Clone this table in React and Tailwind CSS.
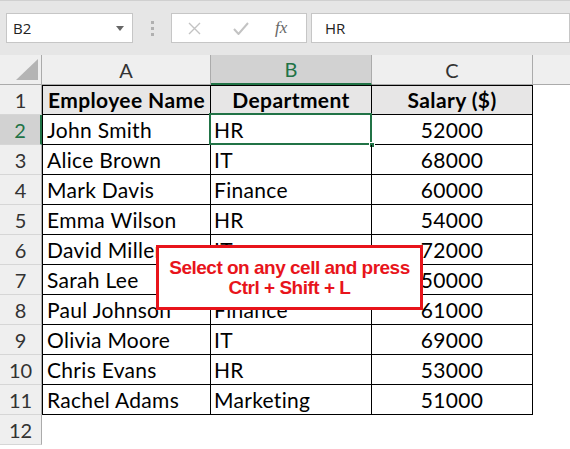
import React from 'react';

const rows = [
  ['John Smith', 'HR', '52000'],
  ['Alice Brown', 'IT', '68000'],
  ['Mark Davis', 'Finance', '60000'],
  ['Emma Wilson', 'HR', '54000'],
  ['David Miller', 'IT', '72000'],
  ['Sarah Lee', 'Finance', '50000'],
  ['Paul Johnson', 'Finance', '61000'],
  ['Olivia Moore', 'IT', '69000'],
  ['Chris Evans', 'HR', '53000'],
  ['Rachel Adams', 'Marketing', '51000'],
];

const cellFont = { fontFamily: 'Lato, "Open Sans", sans-serif' };

function RowHead({ n, active }) {
  return (
    <div
      className={
        'h-[30px] flex items-center justify-center text-[20px] border-b border-[#d6d6d6] ' +
        (active
          ? 'bg-[#d2d2d2] text-[#217346] border-r-2 border-r-[#217346]'
          : 'bg-[#efefef] text-[#333] border-r border-r-[#ababab]')
      }
    >
      {n}
    </div>
  );
}

export default function App() {
  return (
    <div className="relative w-[570px] h-[449px] overflow-hidden bg-white" style={cellFont}>
      {/* Toolbar */}
      <div className="h-[55px] bg-[#e6e6e6] border-t border-[#d0d0d0] flex items-center px-[6px]" style={{ fontFamily: '"Open Sans", sans-serif' }}>
        <div className="w-[127px] h-[30px] bg-white border border-[#c6c6c6] flex items-center justify-between pl-[6px] pr-[8px]">
          <span className="text-[15px] text-[#222]">B2</span>
          <svg width="8" height="5" viewBox="0 0 8 5"><path d="M0 0h8L4 5z" fill="#666" /></svg>
        </div>
        <div className="w-[38px] flex flex-col items-center gap-[3px]">
          <div className="w-[3px] h-[3px] bg-[#b0b0b0]" />
          <div className="w-[3px] h-[3px] bg-[#b0b0b0]" />
          <div className="w-[3px] h-[3px] bg-[#b0b0b0]" />
        </div>
        <div className="w-[136px] h-[30px] bg-white border border-[#c6c6c6] flex items-center">
          <svg className="ml-[16px]" width="13" height="13" viewBox="0 0 13 13">
            <path d="M1 1l11 11M12 1L1 12" stroke="#c3c3c3" strokeWidth="1.4" fill="none" />
          </svg>
          <svg className="ml-[32px]" width="16" height="13" viewBox="0 0 16 13">
            <path d="M1 7l4.5 5L15 1" stroke="#c3c3c3" strokeWidth="2" fill="none" />
          </svg>
          <span className="ml-[26px] text-[17px] italic text-[#666]" style={{ fontFamily: '"Liberation Serif", serif' }}>fx</span>
        </div>
        <div className="ml-[4px] flex-1 h-[30px] bg-white border border-[#c6c6c6] flex items-center pl-[13px] -mr-[6px]">
          <span className="text-[15px] text-[#222]">HR</span>
        </div>
      </div>

      {/* Grid */}
      <div className="grid grid-cols-[42px_169px_161px_161px_1fr]">
        {/* column headers */}
        <div className="h-[30px] bg-[#efefef] border-r border-b border-[#ababab] flex items-end justify-end pr-[3px] pb-[4px]">
          <svg width="22" height="21" viewBox="0 0 22 21"><path d="M22 0V21H0z" fill="#b4b4b4" /></svg>
        </div>
        <div className="h-[30px] bg-[#efefef] border-r border-b border-[#ababab] flex items-center justify-center text-[20px] text-[#333]">A</div>
        <div className="h-[30px] bg-[#d2d2d2] border-r border-[#ababab] border-b-2 border-b-[#217346] flex items-center justify-center text-[20px] text-[#217346]">B</div>
        <div className="h-[30px] bg-[#efefef] border-r border-b border-[#ababab] flex items-center justify-center text-[20px] text-[#333]">C</div>
        <div className="h-[30px] bg-[#efefef] border-b border-[#ababab]" />

        {/* row 1 */}
        <RowHead n={1} />
        <div className="h-[30px] bg-[#e7e6e6] border border-black flex items-center justify-center text-[21px] tracking-[0.4px] font-bold text-black">Employee Name</div>
        <div className="h-[30px] bg-[#e7e6e6] border-y border-r border-black flex items-center justify-center text-[21px] tracking-[0.4px] font-bold text-black">Department</div>
        <div className="h-[30px] bg-[#e7e6e6] border-y border-r border-black flex items-center justify-center text-[21px] tracking-[0.4px] font-bold text-black">Salary ($)</div>
        <div className="h-[30px]" />

        {rows.map((r, i) => (
          <React.Fragment key={i}>
            <RowHead n={i + 2} active={i === 0} />
            <div className="h-[30px] border-x border-b border-black flex items-center pl-[4px] text-[21px] tracking-[0.3px] text-black">{r[0]}</div>
            <div className="relative h-[30px] border-r border-b border-black flex items-center pl-[3px] text-[21px] tracking-[0.3px] text-black">
              {r[1]}
              {i === 0 && (
                <>
                  <div className="absolute -left-[2px] -top-[2px] -right-[1px] -bottom-[1px] border-2 border-[#217346]" />
                  <div className="absolute -right-[4px] -bottom-[4px] w-[6px] h-[6px] bg-[#217346] border border-white" />
                </>
              )}
            </div>
            <div className="h-[30px] border-r border-b border-black flex items-center justify-center text-[21px] tracking-[0.3px] text-black">{r[2]}</div>
            <div className="h-[30px]" />
          </React.Fragment>
        ))}

        <RowHead n={12} />
        <div className="h-[30px] col-span-4" />
      </div>

      {/* Callout */}
      <div
        className="absolute left-[156px] top-[245px] w-[267px] h-[65px] bg-white border-[3px] border-[#e8141b] flex flex-col items-center justify-center text-[#e8141b] font-bold text-[19px] leading-[20px] tracking-[-0.5px]"
        style={{ fontFamily: '"Liberation Sans", Arial, sans-serif' }}
      >
        <span>Select on any cell and press</span>
        <span>Ctrl + Shift + L</span>
      </div>
    </div>
  );
}
